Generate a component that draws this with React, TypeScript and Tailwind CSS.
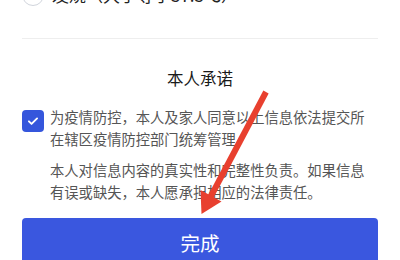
export default function App() {
  return (
    <div
      className="relative w-[400px] h-[260px] overflow-hidden bg-white"
      style={{ fontFamily: '"Noto Sans CJK SC", "Noto Sans", sans-serif' }}
    >
      {/* cut-off option row */}
      <div className="-mt-[16px] flex items-center h-[22px] pl-[22px]">
        <span className="w-[22px] h-[22px] rounded-full border border-gray-300" />
        <span className="ml-[8px] text-[17px] leading-[22px] text-[#222]">
          发烧（大于等于37.3℃）
        </span>
      </div>

      <div className="mt-[32px] mx-[22px] border-t border-[#eeeeee]" />

      {/* commitment */}
      <h2 className="mt-[27px] text-center text-[16.5px] leading-[24px] text-[#1a1a1a]">
        本人承诺
      </h2>

      <div className="mt-[16px] flex pl-[22px]">
        <span className="mt-[4px] w-[22px] h-[22px] shrink-0 rounded-[4px] bg-[#3556dc] flex items-center justify-center">
          <svg width="14" height="14" viewBox="0 0 24 24" fill="none">
            <path d="M5 12.5l4.5 4.5L19 7.5" stroke="white" strokeWidth="3.2" strokeLinecap="round" strokeLinejoin="round" />
          </svg>
        </span>
        <div className="ml-[6px] w-[320px] text-[14.3px] leading-[22px] text-[#555]">
          <p>为疫情防控，本人及家人同意以上信息依法提交所在辖区疫情防控部门统筹管理</p>
          <p className="mt-[9px]">
            本人对信息内容的真实性和完整性负责。如果信息有误或缺失，本人愿承担相应的法律责任。
          </p>
        </div>
      </div>

      <div className="mt-[15px] mx-[22px] h-[50px] rounded-[4px] bg-[#3a57df] flex items-center justify-center text-white text-[19.5px]">
        完成
      </div>

      {/* red annotation arrow */}
      <svg className="absolute left-0 top-0 pointer-events-none" width="400" height="260">
        <line x1="266" y1="92" x2="210" y2="198" stroke="#e8402f" strokeWidth="6" />
        <polygon points="201.5,214 200.5,190 221.5,201.5" fill="#e8402f" />
      </svg>
    </div>
  );
}
